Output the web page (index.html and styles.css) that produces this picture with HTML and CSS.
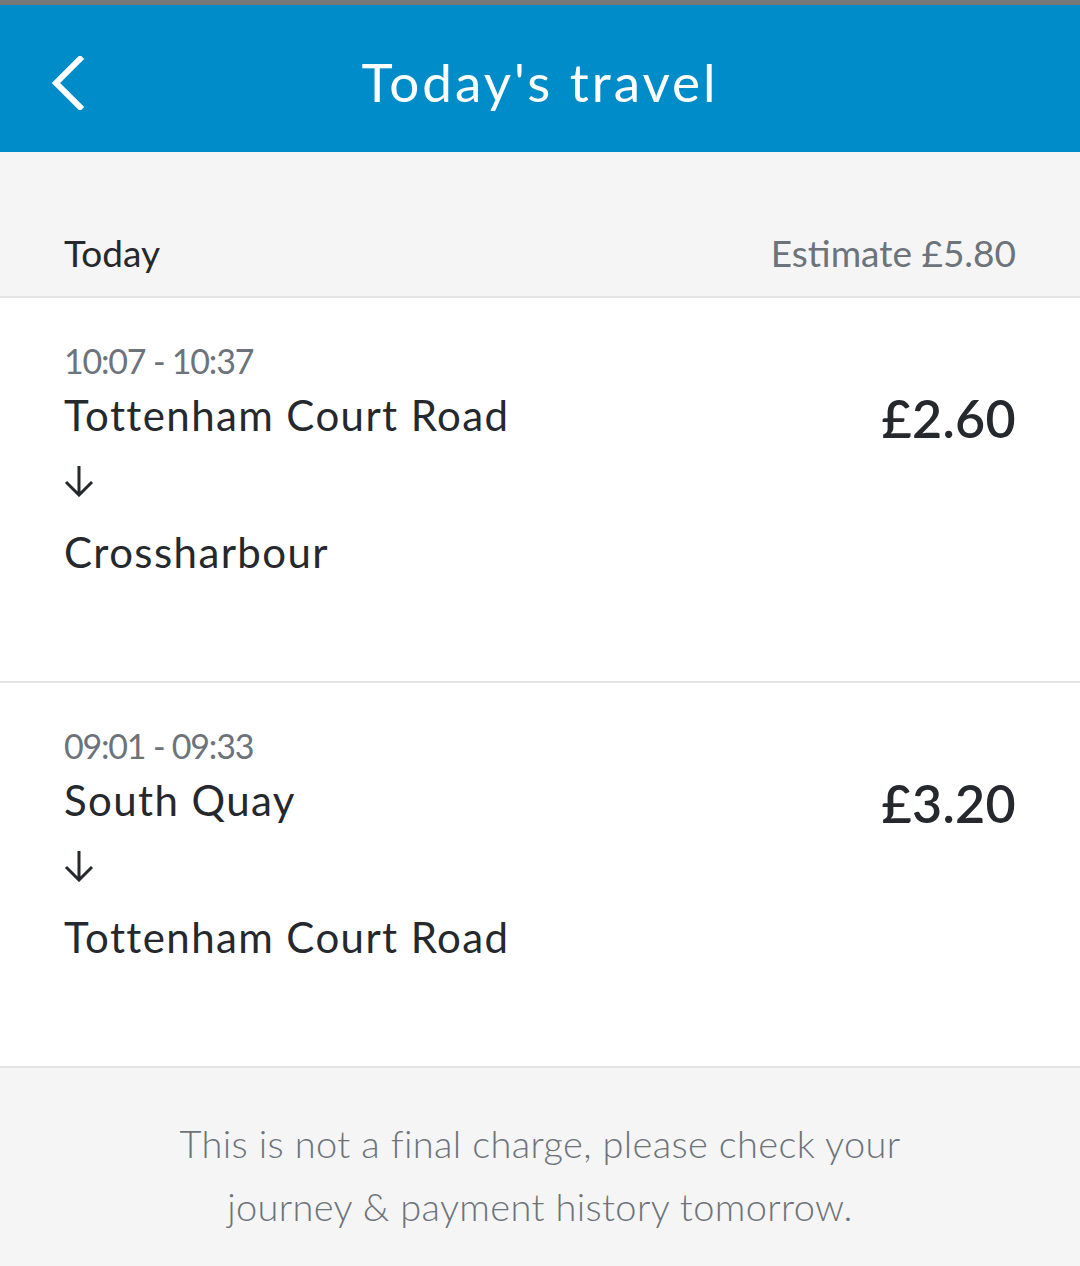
FILE: index.html
```html
<!DOCTYPE html>
<html>
<head>
<meta charset="utf-8">
<link rel="stylesheet" href="styles.css">
</head>
<body>
<div class="statusline"></div>
<header class="appbar">
  <span class="back">
    <svg width="36" height="54" viewBox="0 0 36 54"><path d="M31 3 L7 27 L31 51" fill="none" stroke="#fff" stroke-width="6" stroke-linecap="square"/></svg>
  </span>
  <h1 class="title">Today's travel</h1>
</header>
<main>
  <div class="section-head">
    <span class="day">Today</span>
    <span class="estimate">Estimate £5.80</span>
  </div>
  <div class="journey">
    <div class="stops">
      <div class="time">10:07 - 10:37</div>
      <div class="station">Tottenham Court Road</div>
      <div class="arrow"><svg width="30" height="32" viewBox="0 0 30 32"><path d="M15 1 V30 M2 17 L15 30 L28 17" fill="none" stroke="#25282d" stroke-width="3"/></svg></div>
      <div class="station">Crossharbour</div>
    </div>
    <div class="price">£2.60</div>
  </div>
  <div class="journey">
    <div class="stops">
      <div class="time">09:01 - 09:33</div>
      <div class="station">South Quay</div>
      <div class="arrow"><svg width="30" height="32" viewBox="0 0 30 32"><path d="M15 1 V30 M2 17 L15 30 L28 17" fill="none" stroke="#25282d" stroke-width="3"/></svg></div>
      <div class="station">Tottenham Court Road</div>
    </div>
    <div class="price">£3.20</div>
  </div>
  <div class="note">This is not a final charge, please check your<br>journey &amp; payment history tomorrow.</div>
</main>
</body>
</html>
```
FILE: styles.css
```css
html, body { margin: 0; padding: 0; }
body {
  width: 1080px;
  height: 1266px;
  overflow: hidden;
  background: #f5f5f5;
  font-family: Lato, "Open Sans", sans-serif;
  color: #25282d;
}
.statusline { height: 5px; background: #787878; }
.appbar {
  height: 147px;
  background: #008cc8;
  display: flex;
  align-items: center;
  justify-content: center;
  position: relative;
}
.back {
  position: absolute;
  left: 49px;
  top: 51px;
  display: flex;
}
.title {
  margin: 6px 0 0 0;
  color: #fff;
  font-weight: 400;
  font-size: 53px;
  letter-spacing: 3px;
}
.section-head {
  height: 146px;
  box-sizing: border-box;
  display: flex;
  justify-content: space-between;
  align-items: flex-end;
  padding: 0 64px 21px 64px;
  border-bottom: 2px solid #e4e4e4;
}
.day { font-size: 37px; color: #25282d; }
.estimate { font-size: 37px; color: #6c737a; }
.journey {
  background: #fff;
  display: flex;
  justify-content: space-between;
  align-items: flex-start;
  padding: 41px 64px 0 64px;
  height: 385px;
  box-sizing: border-box;
  border-bottom: 2px solid #e4e4e4;
}
.time { font-size: 34px; color: #6c737a; line-height: 44px; letter-spacing: -1.2px; }
.station { font-size: 42px; line-height: 58px; letter-spacing: 1.4px; margin-top: 3px; }
.arrow { height: 78px; display: flex; align-items: center; margin-top: -2px; }
.price {
  font-size: 52px;
  font-weight: 600;
  margin-top: 48px;
  letter-spacing: 0.3px;
}
.note {
  text-align: center;
  font-size: 38px;
  font-weight: 300;
  color: #6c737a;
  line-height: 63px;
  padding-top: 44px;
  letter-spacing: 0.35px;
}
```
